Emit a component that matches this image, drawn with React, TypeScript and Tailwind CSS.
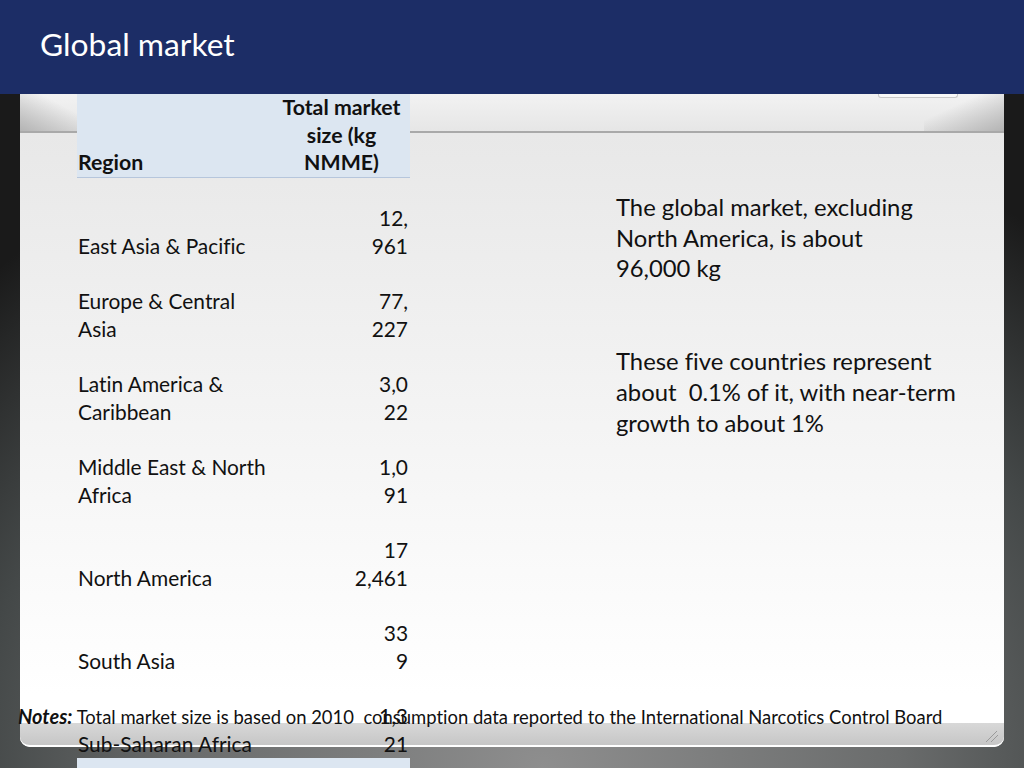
const rows: [string[], string[]][] = [
  [['East Asia & Pacific'], ['12,', '961']],
  [['Europe & Central', 'Asia'], ['77,', '227']],
  [['Latin America &', 'Caribbean'], ['3,0', '22']],
  [['Middle East & North', 'Africa'], ['1,0', '91']],
  [['North America'], ['17', '2,461']],
  [['South Asia'], ['33', '9']],
  [['Sub-Saharan Africa'], ['1,3', '21']],
];

function Lines({ items }: { items: string[] }) {
  return (
    <>
      {items.map((line) => (
        <div key={line}>{line}</div>
      ))}
    </>
  );
}

export default function App() {
  return (
    <div className="relative h-[768px] w-[1024px] overflow-hidden bg-[radial-gradient(ellipse_790px_690px_at_53%_100%,#8e8e8e_0%,#6a6c6c_45%,#444848_72%,#1a1a1a_100%)] font-['Lato','Liberation_Sans',sans-serif] text-[#111] [font-variant-ligatures:none]">
      <header className="relative z-20 flex h-[94px] items-center bg-[#1c2d66] pb-[5px] pl-[40px] text-[31.8px] text-white">
        Global market
      </header>

      <main className="relative mx-[20px] h-[653px] rounded-b-[10px] bg-[linear-gradient(to_bottom,#e8e8e8_40px,#ffffff_600px)]">
        {/* top and bottom bands of the slide template */}
        <div className="absolute inset-x-0 top-0 flex h-[39px] justify-between border-b-2 border-[#a9a9a9] bg-[linear-gradient(to_bottom,#f2f2f2,#e6e6e6)]">
          <div className="w-[70px] bg-[linear-gradient(to_top_right,#b4b4b4,transparent_65%)]" />
          <div className="w-[80px] bg-[linear-gradient(to_top_left,#b4b4b4,transparent_65%)]" />
          <div className="absolute right-[46px] top-0 h-[4px] w-[80px] rounded-b-[3px] border-x border-b border-[#c8c8c8] bg-[#f8f8f8]" />
        </div>
        <div className="absolute inset-x-0 bottom-0 flex h-[24px] items-end justify-end rounded-b-[10px] border-b-2 border-white bg-[linear-gradient(to_bottom,#d8d8d8,#c6c6c6)] pb-[2px] pr-[5px]">
          <svg width="14" height="14" viewBox="0 0 14 14" stroke="#9a9a9a" strokeWidth="1">
            <path d="M1 13 12 2M6 13l7-7" />
          </svg>
        </div>

        <div className="relative z-10 flex pl-[57px]">
          <table className="w-[333px] shrink-0 table-fixed border-collapse text-[20.9px] leading-[27.5px]">
            <thead>
              <tr className="h-[83px] border-b border-[#b6c6dc] bg-[#dce6f1] text-[21.3px] font-bold">
                <th className="w-[204px] pl-[1px] text-left align-bottom">Region</th>
                <th className="pr-[8px] text-center align-bottom">
                  Total market
                  <br />
                  size (kg
                  <br />
                  NMME)
                </th>
              </tr>
            </thead>
            <tbody>
              {rows.map(([region, value]) => (
                <tr key={region[0]} className="h-[83px]">
                  <td className="pb-[1px] pl-[1px] align-bottom">
                    <Lines items={region} />
                  </td>
                  <td className="pb-[1px] pr-[2px] text-right align-bottom">
                    <Lines items={value} />
                  </td>
                </tr>
              ))}
              <tr className="h-[83px] bg-[#dce6f1]">
                <td colSpan={2} />
              </tr>
            </tbody>
          </table>

          <div className="ml-[206px] flex w-[350px] flex-col gap-[62px] pt-[98px] text-[23.8px] leading-[30.7px]">
            <p>
              The global market, excluding
              <br />
              North America, is about
              <br />
              96,000 kg
            </p>
            <p>
              These five countries represent
              <br />
              about&nbsp; 0.1% of it, with near-term
              <br />
              growth to about 1%
            </p>
          </div>
        </div>

        <p className="absolute left-[-2px] top-[609px] z-10 whitespace-nowrap text-[18.45px] leading-[26px]">
          <b className="text-[20px] italic">Notes:</b> Total market size is based on 2010&nbsp; consumption data reported to the International Narcotics Control Board
        </p>
      </main>
    </div>
  );
}
